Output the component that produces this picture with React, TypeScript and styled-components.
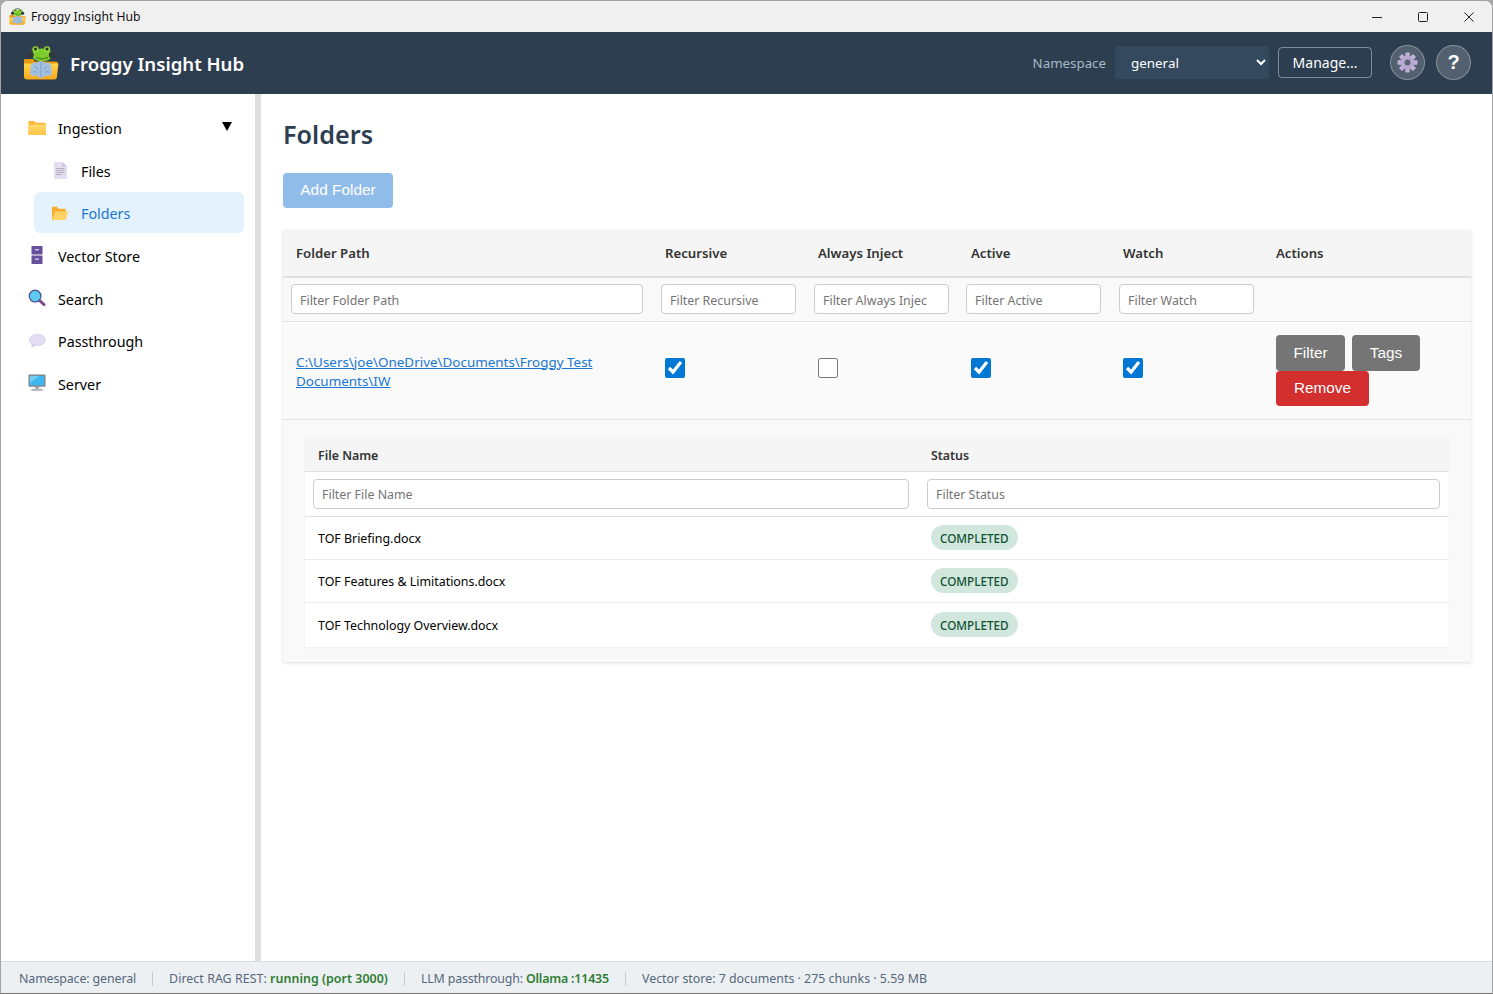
import React from "react";
import styled, { createGlobalStyle } from "styled-components";

const UI = `"Noto Sans", "Open Sans", sans-serif`;
const BTN = `"Liberation Sans", Arial, sans-serif`;

const Global = createGlobalStyle`
  * { box-sizing: border-box; }
  html, body { margin: 0; height: 100%; background: #a9a9a9; }
  body { font-family: ${UI}; color: #000; }
  input::placeholder { color: #757575; opacity: 1; }
`;

const Frame = styled.div`
  width: 1493px; height: 994px; display: flex; flex-direction: column;
  border: 1px solid #a3a3a3; border-bottom-color: #6f6f6f;
  border-radius: 8px 8px 0 0; overflow: hidden; background: #fff;
`;
const TitleBar = styled.div`
  height: 31px; flex: none; background: #f0f0f0; display: flex; align-items: center; padding-left: 8px;
`;
const TitleText = styled.span`
  font-size: 12.1px; margin-left: 5px; padding-bottom: 1px; color: #111; flex: 1;
`;
const WinButton = styled.span`
  width: 46px; height: 31px; display: flex; align-items: center; justify-content: center;
`;
const Header = styled.header`
  height: 62px; flex: none; background: #2c3e50; display: flex; align-items: center; padding: 0 21px 2px 22px;
`;
const Brand = styled.h1`
  margin: 3px 0 0 11px; flex: 1; color: #fff; font-size: 18.6px; font-weight: 600;
`;
const NsLabel = styled.label`
  font-size: 13.3px; color: #a9b9c6; margin: 2px 9px 0 0;
`;
const NsSelect = styled.select`
  width: 154px; height: 33px; border: none; border-radius: 4px; background: #34495e; color: #fff;
  font: 13.4px ${UI}; padding: 2px 12px 0;
`;
const Manage = styled.button`
  width: 94px; height: 31px; margin-left: 9px; background: transparent; color: #fff;
  border: 1px solid rgba(255,255,255,.4); border-radius: 4px; font: 14px ${UI}; padding: 1px 0 0;
`;
const Round = styled.button<{ $gap: number }>`
  width: 35px; height: 35px; margin-left: ${p => p.$gap}px; border-radius: 50%;
  background: rgba(255,255,255,.18); border: 1px solid rgba(255,255,255,.3); color: #fff;
  display: flex; align-items: center; justify-content: center; padding: 0;
  font: bold 20px ${BTN};
`;
const Body = styled.div`
  flex: 1; min-height: 0; display: flex;
`;
const Sidebar = styled.nav`
  width: 260px; flex: none; border-right: 6px solid #dedede; padding: 13px 11px 0 11px;
  display: flex; flex-direction: column; gap: 1.67px;
`;
const NavRow = styled.div<{ $sub?: boolean; $active?: boolean }>`
  height: 41px; flex: none; display: flex; align-items: center; gap: 12px; border-radius: 6px;
  margin-left: ${p => (p.$sub ? 22 : 0)}px;
  padding: 2px 12px 0 ${p => (p.$sub ? 17 : 16)}px;
  font-size: 14.3px;
  background: ${p => (p.$active ? "#e3f2fd" : "transparent")};
  color: ${p => (p.$active ? "#1976d2" : "#000")};
`;
const NavIcon = styled.span`
  width: 18px; height: 18px; flex: none; display: flex; align-items: center; justify-content: center;
  margin-top: -2px;
`;
const Caret = styled.span`
  margin-left: auto; width: 0; height: 0; margin-bottom: 5px;
  border-left: 5px solid transparent; border-right: 5px solid transparent; border-top: 9px solid #000;
`;
const Main = styled.main`
  flex: 1; min-width: 0; padding: 0 21px 0 22px;
`;
const PageTitle = styled.h2`
  margin: 23px 0 0; height: 35px; line-height: 35px; font-size: 25.2px; font-weight: 600; color: #2c3e50;
`;
const AddButton = styled.button`
  display: block; margin: 21px 0 22px; width: 110px; height: 35px; border: none; border-radius: 4px;
  background: #90bcea; color: #fff; font: 15.4px ${BTN}; padding: 0 0 2px;
`;
const Card = styled.div`
  box-shadow: 0 1px 3px rgba(0,0,0,.14); background: #f9f9f9;
`;
const Table = styled.table`
  width: 100%; table-layout: fixed; border-collapse: separate; border-spacing: 0;
`;
const Col = styled.col<{ $w: number }>`
  width: ${p => p.$w}px;
`;
const Th = styled.th<{ $h: number; $b: number; $small?: boolean }>`
  height: ${p => p.$h}px; background: #f5f5f5; text-align: left;
  padding: ${p => (p.$small ? "2px 13px 0" : "0 13px")};
  font-size: ${p => (p.$small ? 12.4 : 13.2)}px; font-weight: 600; color: #333;
  border-bottom: ${p => p.$b}px solid #dfdfdf;
`;
const FilterTd = styled.td<{ $h: number; $bg: string; $pl: number; $lift?: boolean }>`
  height: ${p => p.$h}px; padding: 0 9px ${p => (p.$lift ? 1 : 0)}px ${p => p.$pl}px;
  background: ${p => p.$bg}; border-bottom: 1px solid #e2e2e2;
`;
const FilterInput = styled.input<{ $wide?: boolean }>`
  display: block; width: 100%; height: 30px; border: 1px solid #ccc; border-radius: 4px; background: #fff;
  padding: ${p => (p.$wide ? "0 8px" : "2px 21px 0 8px")}; font: 12.4px ${UI}; color: #000; outline: none;
`;
const Td = styled.td`
  height: 98px; padding: 0 13px; background: #fafafa; border-bottom: 1px solid #e2e2e2; vertical-align: middle;
`;
const PathLink = styled.a`
  display: block; color: #1976d2; text-decoration: underline; font-size: 13.43px; line-height: 19px; padding-top: 2px;
`;
const Check = styled.input`
  display: block; width: 20px; height: 20px; margin: 0 0 6px; accent-color: #0078d4;
`;
const Actions = styled.div`
  display: flex; flex-wrap: wrap; column-gap: 7px;
`;
const Action = styled.button<{ $bg: string; $h: number; $w: number }>`
  width: ${p => p.$w}px; height: ${p => p.$h}px; padding: 0 0 1px; border: none; border-radius: 4px; background: ${p => p.$bg};
  color: #fff; font: 15.3px ${BTN};
`;
const DetailTd = styled.td`
  padding: 17px 22px 15px 22px; background: #f9f9f9;
`;
const SubWrap = styled.div`
  background: #fff; box-shadow: 0 1px 2px rgba(0,0,0,.05);
`;
const SubTd = styled.td<{ $h: number; $last?: boolean }>`
  height: ${p => p.$h}px; padding: 0 13px; font-size: 12.4px; background: #fff;
  border-bottom: ${p => (p.$last ? 0 : 1)}px solid #ececec;
`;
const Badge = styled.span`
  display: block; width: fit-content; height: 25px; line-height: 26px; padding: 0 9px; border-radius: 13px; margin-bottom: 1px;
  background: #d1e7dd; color: #0f5132; font-size: 11.7px; font-weight: 500;
`;
const StatusBar = styled.footer`
  height: 32px; flex: none; background: #ecf0f3; border-top: 1px solid #d9dde1; display: flex; align-items: center;
  padding: 2px 0 0 18px; font-size: 12.4px; color: #56677a; gap: 16px;
`;
const StatusItem = styled.span<{ $fit: number }>`
  letter-spacing: ${p => p.$fit}px;
`;
const Sep = styled.span`
  width: 1px; height: 14px; background: #c3cbd2;
`;
const Ok = styled.b`
  color: #2e7d32; font-weight: 600;
`;

const FrogLogo = ({ size }: { size: number }) => (
  <svg width={size} height={size} viewBox="0 0 36 36">
    <defs>
      <linearGradient id="folderFill" x1="0" y1="0" x2="0" y2="1">
        <stop offset="0" stopColor="#ffd84a" />
        <stop offset="1" stopColor="#f8a81a" />
      </linearGradient>
    </defs>
    <path d="M7 10C7 -1 29 -1 29 10" fill="none" stroke="#3a3f44" strokeWidth="1.800" />
    <ellipse cx="19" cy="11" rx="10.500" ry="6.500" fill="#7ccb2e" />
    <circle cx="12.500" cy="5.500" r="3.200" fill="#8fd63c" />
    <circle cx="24" cy="5.500" r="3.200" fill="#8fd63c" />
    <circle cx="12.500" cy="5" r="1.500" fill="#26331a" />
    <circle cx="24" cy="5" r="1.500" fill="#26331a" />
    <circle cx="7.500" cy="11" r="3.200" fill="#33383d" />
    <circle cx="29" cy="11" r="3.200" fill="#33383d" />
    <path d="M13 13.500Q19 16.500 25 13.500" fill="none" stroke="#3f7a12" strokeWidth="1" />
    <path d="M2 15h8l2 2.500h21a2 2 0 0 1 2 2V21H1v-5a1 1 0 0 1 1-1z" fill="#e59a10" />
    <path d="M1 19.500h34.500l-1.500 13a3 3 0 0 1-3 3H4a3 3 0 0 1-3-3z" fill="url(#folderFill)" />
    <g fill="#a3c0e0">
      <circle cx="12" cy="23" r="4.500" />
      <circle cx="18" cy="21.500" r="4.500" />
      <circle cx="24" cy="23" r="4.500" />
      <circle cx="11" cy="28" r="4" />
      <circle cx="18" cy="29" r="5" />
      <circle cx="25" cy="28" r="4" />
    </g>
    <path d="M18 18v15M12 22.500q2.500 1 2.500 3M24 22.500q-2.500 1-2.500 3M10 28q2.500-1 4 .5M26 28q-2.500-1-4 .5" fill="none" stroke="#7297c0" strokeWidth=".8" />
  </svg>
);
const ClosedFolder = () => (
  <svg width="19" height="18" viewBox="0 0 19 18">
    <defs>
      <linearGradient id="navFolder" x1="0" y1="0" x2="0" y2="1">
        <stop offset="0" stopColor="#ffdc70" />
        <stop offset="1" stopColor="#ffc444" />
      </linearGradient>
    </defs>
    <path d="M0.500 2.500A1 1 0 0 1 1.500 1.500h5l2 2h9a1.500 1.500 0 0 1 1.500 1.500v10A1.500 1.500 0 0 1 17.500 16.500H1.500a1 1 0 0 1-1-1z" fill="#fdb93a" />
    <path d="M0.500 5.500H19V15a1.500 1.500 0 0 1-1.500 1.500H2A1.500 1.500 0 0 1 .5 15z" fill="url(#navFolder)" />
  </svg>
);
const OpenFolder = () => (
  <svg width="19" height="18" viewBox="0 0 19 18">
    <path d="M1 2.500h5l2 2h7.500v4H1z" fill="#f6ad2f" />
    <path d="M1 3V16.500h2L5 8H4z" fill="#f6ad2f" />
    <path d="M4.500 7.500H18.500L15.500 16.500H1z" fill="#ffd266" />
  </svg>
);
const FileIcon = () => (
  <svg width="14" height="17" viewBox="0 0 14 17">
    <path d="M1 0h8.500L14 4.500V17H1z" fill="#e4dff0" />
    <path d="M9.500 0L14 4.500H9.500z" fill="#c9c2db" />
    <path d="M3 6.500h8.500M3 8.500h8.500M3 10.500h8.500M3 12.500h6" stroke="#a7a2b4" strokeWidth=".8" />
  </svg>
);
const Cabinet = () => (
  <svg width="12" height="18" viewBox="0 0 12 18">
    <rect x="0.500" y="0" width="11" height="8.500" rx=".6" fill="#67509c" />
    <rect x="0.500" y="9.500" width="11" height="8.500" rx=".6" fill="#67509c" />
    <rect x="4" y="3" width="4" height="1.400" fill="#cfc6e6" />
    <rect x="4" y="12.500" width="4" height="1.400" fill="#cfc6e6" />
  </svg>
);
const Magnifier = () => (
  <svg width="19" height="18" viewBox="0 0 19 18">
    <path d="M12 11.500L17 16" stroke="#7d4b8c" strokeWidth="3" strokeLinecap="round" />
    <circle cx="7.500" cy="7" r="6.200" fill="#5ccbef" stroke="#4f4f90" strokeWidth="1.300" />
  </svg>
);
const Bubble = () => (
  <svg width="19" height="16" viewBox="0 0 19 16">
    <ellipse cx="10" cy="6.800" rx="8.500" ry="6" fill="#e4dcf3" stroke="#cfc5e4" strokeWidth=".6" />
    <path d="M4 10.500L3.500 15.500L9 12z" fill="#d5cbe8" />
  </svg>
);
const Monitor = () => (
  <svg width="19" height="18" viewBox="0 0 19 18">
    <rect x="0.500" y="0" width="18" height="13" rx="1" fill="#7d858d" />
    <path d="M2 1.500H17V11.500H2z" fill="#41b6ee" />
    <path d="M2 1.500H12L2 9z" fill="#6fcdf5" />
    <rect x="7.500" y="13" width="4" height="2" fill="#8f959b" />
    <rect x="3.500" y="15" width="12" height="2.500" rx=".5" fill="#b5b9bd" />
  </svg>
);
const Gear = () => {
  const teeth = [0, 45, 90, 135, 180, 225, 270, 315];
  return (
    <svg width="21" height="21" viewBox="0 0 21 21">
      {teeth.map(a => (
        <rect key={a} x="8.300" y="0.500" width="4.400" height="5" rx=".8" fill="#c2b2d8" transform={`rotate(${a} 10.500 10.500)`} />
      ))}
      <circle cx="10.500" cy="10.500" r="7" fill="#b9a7d1" />
      <circle cx="10.500" cy="10.500" r="3" fill="#56677a" />
    </svg>
  );
};

const folderCols = [369, 153, 153, 152, 153, 208];
const filters = [
  { t: "Folder Path", pl: 8 },
  { t: "Recursive", pl: 9 },
  { t: "Always Inject", pl: 9 },
  { t: "Active", pl: 8 },
  { t: "Watch", pl: 9 },
];

const FileRow = ({ name, h, last }: { name: string; h: number; last?: boolean }) => (
  <tr>
    <SubTd $h={h} $last={last}>{name}</SubTd>
    <SubTd $h={h} $last={last}><Badge>COMPLETED</Badge></SubTd>
  </tr>
);

export default function App() {
  return (
    <>
      <Global />
      <Frame>
        <TitleBar>
          <FrogLogo size={17} />
          <TitleText>Froggy Insight Hub</TitleText>
          <WinButton>
            <svg width="10" height="10" viewBox="0 0 10 10"><path d="M0 5.500h10" stroke="#222" strokeWidth="1" /></svg>
          </WinButton>
          <WinButton>
            <svg width="10" height="10" viewBox="0 0 10 10"><rect x=".5" y=".5" width="9" height="9" rx="1" fill="none" stroke="#222" /></svg>
          </WinButton>
          <WinButton>
            <svg width="10" height="10" viewBox="0 0 10 10"><path d="M.5.500l9 9M9.500.500l-9 9" stroke="#222" strokeWidth="1" /></svg>
          </WinButton>
        </TitleBar>
        <Header>
          <FrogLogo size={36} />
          <Brand>Froggy Insight Hub</Brand>
          <NsLabel>Namespace</NsLabel>
          <NsSelect defaultValue="general"><option>general</option></NsSelect>
          <Manage>Manage...</Manage>
          <Round $gap={18}><Gear /></Round>
          <Round $gap={11}>?</Round>
        </Header>
        <Body>
          <Sidebar>
            <NavRow><NavIcon><ClosedFolder /></NavIcon>Ingestion<Caret /></NavRow>
            <NavRow $sub><NavIcon><FileIcon /></NavIcon>Files</NavRow>
            <NavRow $sub $active><NavIcon><OpenFolder /></NavIcon>Folders</NavRow>
            <NavRow><NavIcon><Cabinet /></NavIcon>Vector Store</NavRow>
            <NavRow><NavIcon><Magnifier /></NavIcon>Search</NavRow>
            <NavRow><NavIcon><Bubble /></NavIcon>Passthrough</NavRow>
            <NavRow><NavIcon><Monitor /></NavIcon>Server</NavRow>
          </Sidebar>
          <Main>
            <PageTitle>Folders</PageTitle>
            <AddButton>Add Folder</AddButton>
            <Card>
              <Table>
                <colgroup>{folderCols.map((w, i) => <Col key={i} $w={w} />)}</colgroup>
                <thead>
                  <tr>
                    {["Folder Path", "Recursive", "Always Inject", "Active", "Watch", "Actions"].map(t => (
                      <Th key={t} $h={48} $b={2}>{t}</Th>
                    ))}
                  </tr>
                  <tr>
                    {filters.map(f => (
                      <FilterTd key={f.t} $h={44} $bg="#f9f9f9" $pl={f.pl} $lift>
                        <FilterInput placeholder={`Filter ${f.t}`} />
                      </FilterTd>
                    ))}
                    <FilterTd $h={44} $bg="#f9f9f9" $pl={8} />
                  </tr>
                </thead>
                <tbody>
                  <tr>
                    <Td><PathLink href="#">C:\Users\joe\OneDrive\Documents\Froggy Test Documents\IW</PathLink></Td>
                    <Td><Check type="checkbox" defaultChecked /></Td>
                    <Td><Check type="checkbox" /></Td>
                    <Td><Check type="checkbox" defaultChecked /></Td>
                    <Td><Check type="checkbox" defaultChecked /></Td>
                    <Td>
                      <Actions>
                        <Action $bg="#757575" $h={36} $w={69}>Filter</Action>
                        <Action $bg="#757575" $h={36} $w={68}>Tags</Action>
                        <Action $bg="#d32f2f" $h={35} $w={93}>Remove</Action>
                      </Actions>
                    </Td>
                  </tr>
                  <tr>
                    <DetailTd colSpan={6}>
                      <SubWrap>
                        <Table>
                          <colgroup><Col $w={613} /><Col $w={531} /></colgroup>
                          <thead>
                            <tr>
                              <Th $h={35} $b={1} $small>File Name</Th>
                              <Th $h={35} $b={1} $small>Status</Th>
                            </tr>
                            <tr>
                              <FilterTd $h={45} $bg="#fff" $pl={8}><FilterInput $wide placeholder="Filter File Name" /></FilterTd>
                              <FilterTd $h={45} $bg="#fff" $pl={9}><FilterInput $wide placeholder="Filter Status" /></FilterTd>
                            </tr>
                          </thead>
                          <tbody>
                            <FileRow name="TOF Briefing.docx" h={43} />
                            <FileRow name="TOF Features & Limitations.docx" h={43} />
                            <FileRow name="TOF Technology Overview.docx" h={44} last />
                          </tbody>
                        </Table>
                      </SubWrap>
                    </DetailTd>
                  </tr>
                </tbody>
              </Table>
            </Card>
          </Main>
        </Body>
        <StatusBar>
          <StatusItem $fit={-0.12}>Namespace: general</StatusItem>
          <Sep />
          <StatusItem $fit={0.05}>Direct RAG REST: <Ok>running (port 3000)</Ok></StatusItem>
          <Sep />
          <StatusItem $fit={-0.17}>LLM passthrough: <Ok>Ollama :11435</Ok></StatusItem>
          <Sep />
          <StatusItem $fit={0}>Vector store: 7 documents · 275 chunks · 5.59 MB</StatusItem>
        </StatusBar>
      </Frame>
    </>
  );
}
